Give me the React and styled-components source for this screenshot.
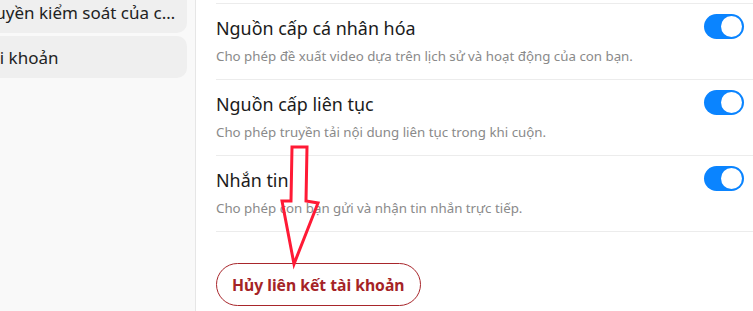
import React from 'react';
import styled, { createGlobalStyle } from 'styled-components';

const GlobalStyle = createGlobalStyle`
  html, body {
    margin: 0;
    padding: 0;
    background: #ffffff;
    overflow: hidden;
  }
  body {
    font-family: "Noto Sans", "Open Sans", sans-serif;
  }
`;

const Page = styled.div`
  display: flex;
  width: 753px;
  height: 311px;
  overflow: hidden;
  position: relative;
`;

const Sidebar = styled.aside`
  flex: 0 0 195px;
  background: #f9f9f9;
  border-right: 1px solid #e6e6e6;
  overflow: hidden;
`;

const NavList = styled.ul`
  list-style: none;
  margin: -9px 8px 0 -34px;
  padding: 0;
  display: flex;
  flex-direction: column;
  gap: 3px;
`;

const NavItem = styled.li`
  height: 42px;
  display: flex;
  align-items: center;
  padding: 0 10px 0 16px;
  background: #efefef;
  border-radius: 10px;
  font-size: 17px;
  color: #222;
  white-space: nowrap;
  overflow: hidden;

  span {
    overflow: hidden;
    text-overflow: ellipsis;
  }
`;

const Main = styled.main`
  flex: 1;
  padding: 3px 0 0 20px;
  display: flex;
  flex-direction: column;
  align-items: flex-start;
`;

const Rows = styled.div`
  align-self: stretch;
  border-bottom: 1px solid #ececec;
`;

const Row = styled.div`
  display: flex;
  align-items: flex-start;
  justify-content: space-between;
  height: 75px;
  border-top: 1px solid #ececec;
  padding: 0 9px 0 0;
`;

const Texts = styled.div`
  display: flex;
  flex-direction: column;
  padding-top: 13px;
`;

const Title = styled.div`
  font-size: 17.9px;
  line-height: 22px;
  color: #1b1b1b;
`;

const Desc = styled.div`
  margin-top: 7px;
  font-size: 13.3px;
  line-height: 20px;
  color: #8a8a8a;
`;

const Toggle = styled.span`
  margin-top: 10px;
  width: 40px;
  height: 25px;
  border-radius: 13px;
  background: ${p => (p.$on ? '#0a84ff' : '#d0d0d0')};
  display: flex;
  align-items: center;
  justify-content: ${p => (p.$on ? 'flex-end' : 'flex-start')};
  padding: 0 2px;
  box-sizing: border-box;

  &::after {
    content: '';
    width: 21px;
    height: 21px;
    border-radius: 50%;
    background: #fff;
  }
`;

const UnlinkButton = styled.button`
  margin-top: 31px;
  height: 43px;
  padding: 0 15px;
  border: 1.5px solid #a8262b;
  border-radius: 22px;
  background: #fff;
  color: #a52326;
  font-family: "Noto Sans", "Open Sans", sans-serif;
  font-weight: 700;
  font-size: 15.7px;
  cursor: pointer;
`;

const Annotation = styled.svg`
  position: absolute;
  left: 0;
  top: 0;
  pointer-events: none;
`;

const settings = [
  {
    title: 'Nguồn cấp cá nhân hóa',
    desc: 'Cho phép đề xuất video dựa trên lịch sử và hoạt động của con bạn.',
  },
  {
    title: 'Nguồn cấp liên tục',
    desc: 'Cho phép truyền tải nội dung liên tục trong khi cuộn.',
  },
  {
    title: 'Nhắn tin',
    desc: 'Cho phép con bạn gửi và nhận tin nhắn trực tiếp.',
  },
];

export default function App() {
  return (
    <>
      <GlobalStyle />
      <Page>
        <Sidebar>
          <NavList>
            <NavItem><span>Quyền kiểm soát của cha mẹ</span></NavItem>
            <NavItem><span>Tài khoản</span></NavItem>
          </NavList>
        </Sidebar>
        <Main>
          <Rows>
            {settings.map(s => (
              <Row key={s.title}>
                <Texts>
                  <Title>{s.title}</Title>
                  <Desc>{s.desc}</Desc>
                </Texts>
                <Toggle $on />
              </Row>
            ))}
          </Rows>
          <UnlinkButton>Hủy liên kết tài khoản</UnlinkButton>
        </Main>
        <Annotation width="753" height="311" viewBox="0 0 753 311">
          <polygon
            points="292,147 307,147 306,201 318,203 294,264 282,201 291,201"
            fill="none"
            stroke="#ff1a35"
            strokeWidth="3"
            strokeLinejoin="miter"
          />
        </Annotation>
      </Page>
    </>
  );
}
